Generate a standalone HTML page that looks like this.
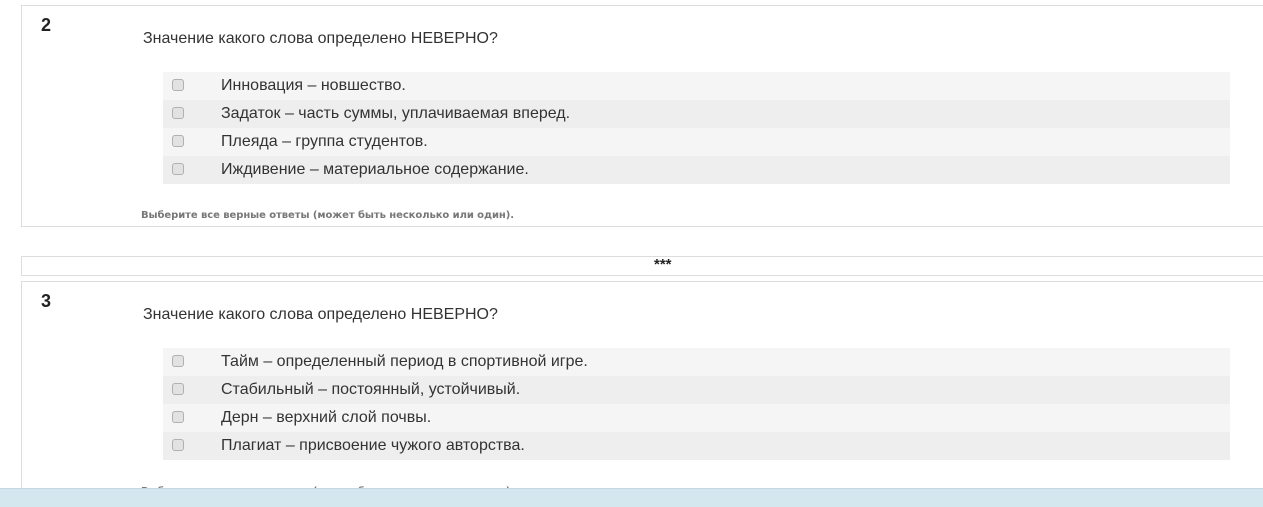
<!DOCTYPE html>
<html lang="ru"><head><meta charset="utf-8"><title>Тест</title>
<style>
html,body{margin:0;padding:0;background:#fff;width:1263px;height:507px;overflow:hidden}
body{position:relative;font-family:"Liberation Sans",Arial,sans-serif;color:#333}
.a{position:absolute;white-space:nowrap}
.panel{position:absolute;left:21px;width:1242px;border:1px solid #ddd;border-right:0;box-sizing:border-box;background:#fff}
.num{font-size:18px;font-weight:bold;color:#222;line-height:20px;left:41px}
.q{font-size:16px;line-height:20px;left:143px;color:#333}
.row{position:absolute;left:163px;width:1067px;height:28px;background:#f5f5f5}
.row.o{background:#eee}
.row i{position:absolute;left:9px;top:7px;width:12px;height:12px;box-sizing:border-box;border:1px solid #b0b0b0;border-radius:3px;background:#e2e2e2}
.row span{position:absolute;left:58px;top:4px;font-size:16px;line-height:20px;white-space:nowrap;color:#333}
.hint{left:141px;font-family:"DejaVu Sans",sans-serif;font-size:10px;font-weight:bold;color:#777;line-height:14px;letter-spacing:-.07px}
</style></head><body>
<div class="panel" style="top:5px;height:222px"></div>
<div class="panel" style="top:256px;height:20px"></div>
<div class="panel" style="top:281px;height:226px;border-bottom:0"></div>
<div class="a" style="left:654px;top:257px;font-size:15px;font-weight:bold;line-height:16px;color:#222">***</div>

<div class="a num" style="top:15px">2</div>
<div class="a q" style="top:29px">Значение какого слова определено НЕВЕРНО?</div>
<div class="row" style="top:72px"><i></i><span>Инновация – новшество.</span></div>
<div class="row o" style="top:100px"><i></i><span>Задаток – часть суммы, уплачиваемая вперед.</span></div>
<div class="row" style="top:128px"><i></i><span>Плеяда – группа студентов.</span></div>
<div class="row o" style="top:156px"><i></i><span>Иждивение – материальное содержание.</span></div>
<div class="a hint" style="top:209px">Выберите все верные ответы (может быть несколько или один).</div>

<div class="a num" style="top:291px">3</div>
<div class="a q" style="top:305px">Значение какого слова определено НЕВЕРНО?</div>
<div class="row" style="top:348px"><i></i><span>Тайм – определенный период в спортивной игре.</span></div>
<div class="row o" style="top:376px"><i></i><span>Стабильный – постоянный, устойчивый.</span></div>
<div class="row" style="top:404px"><i></i><span>Дерн – верхний слой почвы.</span></div>
<div class="row o" style="top:432px"><i></i><span>Плагиат – присвоение чужого авторства.</span></div>
<div class="a hint" style="top:485px">Выберите все верные ответы (может быть несколько или один).</div>

<div style="position:absolute;left:0;top:488px;width:1263px;height:19px;background:#d5e7ee;border-top:1px solid #c5d8e2;box-sizing:border-box"></div>
</body></html>
